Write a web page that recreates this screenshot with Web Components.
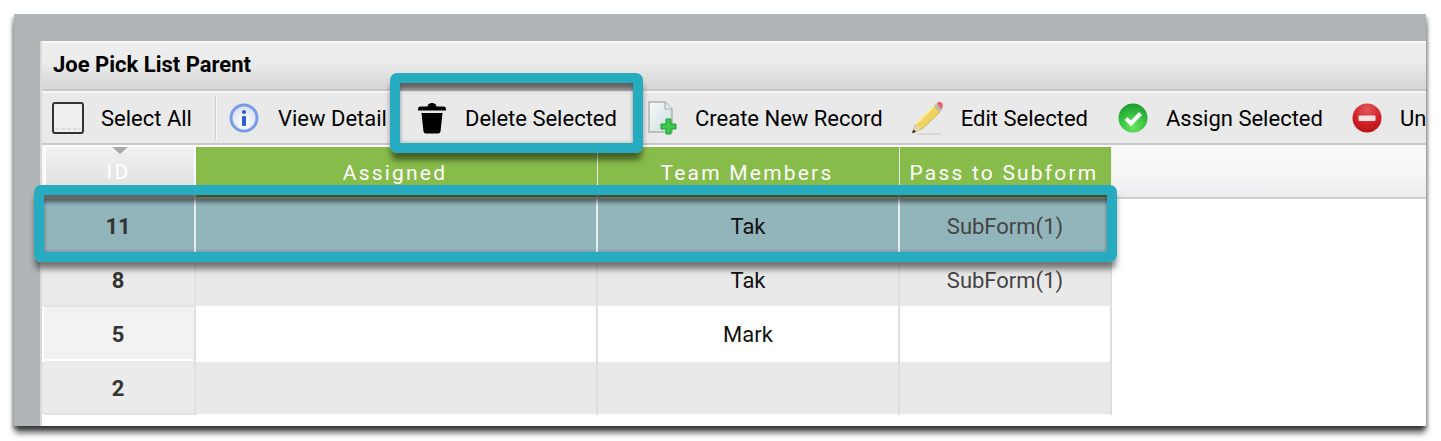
<!DOCTYPE html>
<html>
<head>
<meta charset="utf-8">
<style>
html, body { margin: 0; height: 441px; overflow: hidden; background: #fff; font-family: Roboto, "Liberation Sans", sans-serif; }
body { position: relative; padding: 14px 15px 0 14px; box-sizing: border-box; width: 1441px; }
</style>
</head>
<body>
<list-panel>
  <list-titlebar>Joe Pick List Parent</list-titlebar>
  <list-toolbar>
    <tool-item gap="17" start="10" label="Select All">
      <svg slot="icon" width="32" height="32" viewBox="0 0 32 32"><rect x="1" y="1" width="30" height="30" rx="2" fill="#efefef" stroke="#333" stroke-width="2"/><path d="M3 27h26" stroke="#ddd" stroke-width="2" stroke-dasharray="4 2"/></svg>
    </tool-item>
    <tool-sep></tool-sep>
    <tool-item gap="19" start="12" label="View Detail">
      <svg slot="icon" width="30" height="30" viewBox="0 0 30 30"><defs><radialGradient id="ib" cx=".5" cy=".65" r=".6"><stop offset="0" stop-color="#fff"/><stop offset="1" stop-color="#d8dff2"/></radialGradient></defs><circle cx="15" cy="15" r="13" fill="url(#ib)" stroke="#7a9be8" stroke-width="3"/><circle cx="15" cy="9" r="2.1" fill="#2f5fd0"/><rect x="13" y="13" width="4" height="10" rx="1" fill="#2f5fd0"/></svg>
    </tool-item>
    <tool-item gap="19" start="31" label="Delete Selected">
      <svg slot="icon" width="28" height="32" viewBox="0 0 28 32"><path d="M0 7Q0 4.500 2.500 4.500H9.500Q10 1 14 1T18.500 4.500H25.500Q28 4.500 28 7V8.500H0Z" fill="#000"/><path d="M3.500 11H24.500L22.500 29.500Q22.300 31.500 20 31.500H8Q5.700 31.500 5.500 29.500Z" fill="#000"/></svg>
    </tool-item>
    <tool-item gap="17" start="31" label="Create New Record">
      <svg slot="icon" width="30" height="34" viewBox="0 0 30 34"><defs><linearGradient id="pg" x1="0" y1="0" x2="1" y2="1"><stop offset="0" stop-color="#fafafa"/><stop offset="1" stop-color="#c8dcdd"/></linearGradient></defs><path d="M1 1H17L24 8V31H1Z" fill="url(#pg)" stroke="#a8b2b4" stroke-width="1.400"/><path d="M17 1V8H24" fill="#dfe8e8" stroke="#a8b2b4" stroke-width="1.200"/><path d="M18 18h5v5h5v5h-5v5h-5v-5h-5v-5h5Z" fill="#3cc84a" stroke="#1f9a35"/></svg>
    </tool-item>
    <tool-item gap="18" start="28" label="Edit Selected">
      <svg slot="icon" width="32" height="34" viewBox="0 0 32 34"><path d="M1 32L5 23 23 5 29 11 11 28Z" fill="#eed35c" stroke="#c2a73c" stroke-width=".8"/><path d="M5 23L25 3" stroke="#f8eda0" stroke-width="2"/><path d="M1 32L5 23 11 28Z" fill="#e9d3ab"/><path d="M1 32L2.500 28.500 5 31Z" fill="#222"/><path d="M23 5L26 2 32 7 29 11Z" fill="#bcbcbc"/><path d="M26 2Q28 0 30.500 1.500T31 7L29.500 8Z" fill="#e8656c"/><path d="M6 33H30" stroke="#000" stroke-opacity=".08" stroke-width="2"/></svg>
    </tool-item>
    <tool-item gap="18" start="30" label="Assign Selected">
      <svg slot="icon" width="30" height="30" viewBox="0 0 30 30"><defs><radialGradient id="gb" cx=".5" cy=".8" r=".8"><stop offset="0" stop-color="#6ae862"/><stop offset=".55" stop-color="#36c040"/><stop offset="1" stop-color="#1c9a2e"/></radialGradient></defs><circle cx="15" cy="15" r="14.500" fill="url(#gb)"/><path d="M8 15.500L13 20.500 22.500 10.500" fill="none" stroke="#fff" stroke-width="4"/></svg>
    </tool-item>
    <tool-item gap="18" start="29" label="Un">
      <svg slot="icon" width="30" height="30" viewBox="0 0 30 30"><defs><radialGradient id="rb" cx=".5" cy=".2" r=".9"><stop offset="0" stop-color="#e2575c"/><stop offset=".6" stop-color="#cf1d22"/><stop offset="1" stop-color="#a81216"/></radialGradient></defs><circle cx="15" cy="15" r="14.500" fill="url(#rb)"/><rect x="6.500" y="12.500" width="17" height="5.500" rx="1" fill="#f1e4e4"/></svg>
    </tool-item>
  </list-toolbar>
  <list-header>
    <header-cell kind="id" sort>ID</header-cell>
    <header-cell>Assigned</header-cell>
    <header-cell>Team Members</header-cell>
    <header-cell>Pass to Subform</header-cell>
  </list-header>
  <list-row state="selected" record="11" team="Tak" sub="SubForm(1)"></list-row>
  <list-row state="odd" record="8" team="Tak" sub="SubForm(1)"></list-row>
  <list-row state="even" record="5" team="Mark"></list-row>
  <list-row state="odd" record="2"></list-row>
</list-panel>
<call-out style="left:390px;top:73px;width:253px;height:80px"></call-out>
<call-out style="left:34px;top:185px;width:1083px;height:77px"></call-out>

<script>
function tpl(html) {
	const t = document.createElement('template');
	t.innerHTML = html;
	return t;
}

function define(name, html, ctor) {
	const t = tpl(html);
	customElements.define(name, class extends HTMLElement {
		constructor() {
			super();
			this.attachShadow({mode: 'open'}).appendChild(t.content.cloneNode(true));
		}
		connectedCallback() {
			if (ctor) ctor(this, this.shadowRoot);
		}
	});
}

define('list-panel', `
<style>
:host { display: block; height: 412px; background: #b0b5b7; padding: 27px 0 0 28px; box-sizing: border-box; box-shadow: 0 8px 6px -1px rgba(0,0,0,.6), -2px 3px 3px rgba(0,0,0,.25), 2px 3px 3px rgba(0,0,0,.25); }
.body { height: 385px; background: #fff; border-left: 2px solid #d9d9d9; margin-left: -2px; overflow: hidden; }
</style>
<div class="body"><slot></slot></div>`);

define('list-titlebar', `
<style>
:host { display: flex; align-items: center; height: 50px; padding: 0 0 3px 11px; box-sizing: border-box; border-top: 2px solid #f8f8f8; border-bottom: 2px solid #c9c9c9; background: linear-gradient(#eeeeee, #ececec 40%, #d5d5d5); color: #000; font: 700 22px Roboto, sans-serif; }
</style>
<slot></slot>`);

define('list-toolbar', `
<style>
:host { display: flex; align-items: center; height: 54px; box-sizing: border-box; border-top: 2px solid #f6f6f6; border-bottom: 2px solid #c9c9c9; background: #e9e9e9; overflow: hidden; white-space: nowrap; }
</style>
<slot></slot>`);

define('tool-item', `
<style>
:host { display: flex; flex: none; align-items: center; font: 400 22px Roboto, sans-serif; color: #000; }
::slotted(svg) { display: block; flex: none; }
</style>
<slot name="icon"></slot><span class="label"></span>`, function(el, root) {
	root.querySelector('.label').textContent = el.getAttribute('label');
	root.querySelector('.label').style.marginLeft = el.getAttribute('gap') + 'px';
	el.style.marginLeft = el.getAttribute('start') + 'px';
});

define('tool-sep', `
<style>
:host { display: block; flex: none; width: 2px; height: 44px; margin-left: 23px; background: #fafafa; border-left: 1px solid #cfcfcf; box-sizing: border-box; }
</style>`);

define('list-header', `
<style>
:host { display: grid; grid-template-columns: 154px 402px 302px 212px 1fr; height: 54px; box-sizing: border-box; border-bottom: 2px solid #cfcfcf; background: linear-gradient(#f9f9f9, #f8f8f8 50%, #ebecee); }
</style>
<slot></slot>`);

define('header-cell', `
<style>
:host { display: flex; position: relative; align-items: center; justify-content: center; padding: 2px 3px 0 0; box-sizing: border-box; border-top: 2px solid #fff; border-right: 1px solid #f0f0f0; background: #88bc4a; color: #fff; font: 400 21px Roboto, sans-serif; letter-spacing: 2.200px; }
:host([kind=id]) { background: linear-gradient(#f2f2f2, #dcdcdc); border: 2px solid #fff; border-bottom: 0; margin-left: 2px; padding: 0 3px 0 0; color: #fff; }
.tri { display: none; position: absolute; top: 0; left: 66px; border: 8px solid transparent; border-top: 7px solid #a9a9a9; border-bottom: 0; }
:host([sort]) .tri { display: block; }
</style>
<span class="tri"></span><slot></slot>`);

define('list-row', `
<style>
:host { display: grid; grid-template-columns: 154px 402px 302px 212px; width: 1070px; height: 54px; font: 400 22px Roboto, sans-serif; color: #111; }
div { display: flex; align-items: center; justify-content: center; box-sizing: border-box; border-right: 2px solid #dedede; }
.id { margin-left: 2px; padding-right: 2px; font-weight: 700; color: #333; background: #ebebeb; border-right: 2px solid #e0e0e0; }
.sub { color: #444; }
:host([state=odd]) { background: linear-gradient(transparent 1px, #e9e9e9 1px, #e9e9e9 53px, transparent 53px); }
:host([state=odd]) .id { box-shadow: inset 0 -2px #e3e3e3; }
:host([state=even]) .id { background: #f2f2f2; box-shadow: inset 0 -2px #fff; }
:host([state=selected]) { background: #92b5bb; }
:host([state=selected]) .id { background: #92b5bb; border-right-color: #e6eeee; }
:host([state=selected]) div { border-right-color: #e6eeee; }
:host([state=selected]) .sub { border-right-color: transparent; }
</style>
<div class="id"></div><div></div><div class="team"></div><div class="sub"></div>`, function(el, root) {
	root.querySelector('.id').textContent = el.getAttribute('record');
	root.querySelector('.team').textContent = el.getAttribute('team') || '';
	root.querySelector('.sub').textContent = el.getAttribute('sub') || '';
});

define('call-out', `
<style>
:host { display: block; position: absolute; box-sizing: border-box; border: 10px solid #26abc0; border-radius: 7px; box-shadow: 0 8px 6px -1px rgba(0,0,0,.5), inset 0 9px 4px -2px rgba(0,0,0,.5), inset 0 0 4px rgba(0,0,0,.25); }
</style>`);
</script>
</body>
</html>
